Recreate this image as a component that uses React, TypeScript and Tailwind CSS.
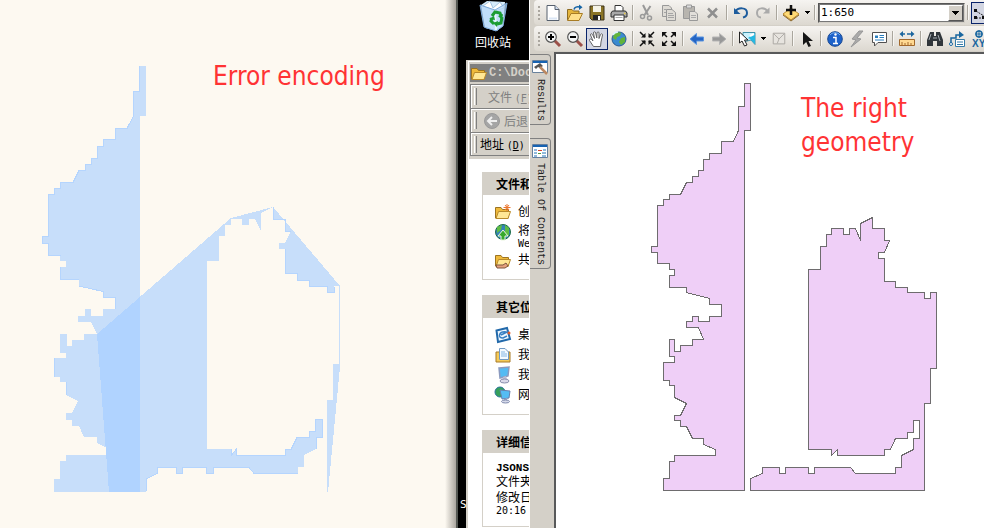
import React from "react";

type Pic = { children: React.ReactNode; className?: string };

function Icon({ children, className = "size-[18px]" }: Pic) {
  return (
    <svg viewBox="0 0 18 18" className={`${className} shrink-0`} fill="none" aria-hidden="true">
      {children}
    </svg>
  );
}

function Tool({ label, active, children }: { label: string; active?: boolean; children: React.ReactNode }) {
  return (
    <button
      type="button"
      aria-label={label}
      className={
        active
          ? "flex h-[22px] w-[22px] shrink-0 items-center justify-center border border-[#0a246a] bg-[#d3d6e2]"
          : "flex h-[22px] w-[22px] shrink-0 items-center justify-center"
      }
    >
      {children}
    </button>
  );
}

function Sep() {
  return <span className="mx-[2px] h-[15px] w-[2px] shrink-0 border-l border-[#aaa69d] bg-[#f8f7f4]" />;
}

function Grip() {
  return (
    <span className="flex w-[8px] shrink-0 flex-col gap-[2px] pl-[4px]">
      <i className="size-[2px] bg-[#aaa69f]" />
      <i className="size-[2px] bg-[#aaa69f]" />
      <i className="size-[2px] bg-[#aaa69f]" />
      <i className="size-[2px] bg-[#aaa69f]" />
    </span>
  );
}

function Caret({ label, className = "w-[10px]" }: { label: string; className?: string }) {
  return (
    <button type="button" aria-label={label} className={`${className} flex h-[22px] shrink-0 items-center justify-center`}>
      <svg viewBox="0 0 5 3" className="h-[3px] w-[5px]" shapeRendering="crispEdges">
        <path d="M0 0H5V1H4V2H3V3H2V2H1V1H0Z" fill="#000" />
      </svg>
    </button>
  );
}

function StandardBar() {
  return (
    <div role="toolbar" aria-label="Standard" className="flex h-[25px] items-center rounded-l-sm bg-linear-to-b from-[#f6f4f1] to-[#dcd8d0]">
      <Grip />
      <Tool label="New">
        <Icon>
          <path d="M3 1.5H11L15 5.5V16.5H3Z" fill="#fff" stroke="#56606e" />
          <path d="M11 1.5V5.5H15" fill="#cfdcf0" stroke="#56606e" />
          <path d="M5 14.5H13" stroke="#dbe6f5" strokeWidth="2" />
        </Icon>
      </Tool>
      <Tool label="Open">
        <Icon>
          <path d="M1.500 16V5.500H6L7.500 7H13V10" fill="#e5b53b" stroke="#8c6a22" />
          <path d="M1.500 16.500L5 9.500H16.500L13 16.500Z" fill="#ffe08a" stroke="#a87c24" />
          <path d="M8 5.500C8.500 3 11 2.500 13.500 3" stroke="#1463a5" strokeWidth="1.500" />
          <path d="M13 0.500L16.500 3.200L13 6Z" fill="#1463a5" />
        </Icon>
      </Tool>
      <Tool label="Save">
        <Icon>
          <path d="M2 2H16V16H4L2 14Z" fill="#8a7426" stroke="#3a3118" />
          <path d="M5 2H13V8H5Z" fill="#f5f3e6" />
          <path d="M5 11H13V16H5Z" fill="#272727" />
          <path d="M10 12H12V16H10Z" fill="#fff" />
        </Icon>
      </Tool>
      <Tool label="Print">
        <Icon>
          <path d="M5 7V1.500H11L13 3.500V7" fill="#fff" stroke="#333" />
          <path d="M2.500 7H15.500L17 9V13H1V9Z" fill="#a9a9a9" stroke="#2c2c2c" />
          <path d="M4 11H14V16.500H4Z" fill="#fff" stroke="#333" />
          <path d="M5.500 13.500H12.500" stroke="#aaa" />
          <path d="M14 9.500H15.500" stroke="#e6c83c" strokeWidth="1.500" />
        </Icon>
      </Tool>
      <Sep />
      <Tool label="Cut">
        <Icon>
          <path d="M5 1L10 11M12.500 2L6.500 11" stroke="#999" strokeWidth="2" />
          <circle cx="4.500" cy="12.500" r="2" stroke="#999" strokeWidth="1.500" />
          <circle cx="11.500" cy="14" r="2" stroke="#999" strokeWidth="1.500" />
        </Icon>
      </Tool>
      <Tool label="Copy">
        <Icon>
          <path d="M2.500 1.500H9L11.500 4V12.500H2.500Z" fill="#dedbd5" stroke="#999" />
          <path d="M6.500 5.500H12L15.500 8.500V16.500H6.500Z" fill="#dedbd5" stroke="#999" />
          <path d="M8 9.500H13M8 11.500H14M8 13.500H14M4 5.500H6M4 8.500H6" stroke="#a5a5a5" />
        </Icon>
      </Tool>
      <Tool label="Paste">
        <Icon>
          <path d="M1.500 2.500H12.500V14.500H1.500Z" fill="#b8b5af" stroke="#999" />
          <path d="M4.500 1H9.500V4H4.500Z" fill="#ddd" stroke="#999" />
          <path d="M7.500 7.500H13L15.500 10V16.500H7.500Z" fill="#e2dfda" stroke="#999" />
          <path d="M9 11.500H14M9 13.500H14" stroke="#aaa" />
        </Icon>
      </Tool>
      <Tool label="Delete">
        <Icon>
          <path d="M4 4.500L13 13.500M13 4.500L4 13.500" stroke="#8f8f8f" strokeWidth="2.500" />
        </Icon>
      </Tool>
      <Sep />
      <Tool label="Undo">
        <Icon>
          <path d="M3 8C6 3 15 3 15 9C15 11.500 13 13 11 13.500" stroke="#1d5c9d" strokeWidth="2" />
          <path d="M2 4V10H8.500Z" fill="#1d5c9d" />
        </Icon>
      </Tool>
      <Tool label="Redo">
        <Icon>
          <path d="M14 8C11 3 3 3 3 9C3 12 5 13.500 7 13.500" stroke="#aaa" strokeWidth="2" />
          <path d="M15.500 3.500V9.500H9Z" fill="#aaa" />
        </Icon>
      </Tool>
      <Sep />
      <Tool label="Add data">
        <Icon className="size-[18px]">
          <path d="M1 10L9 4L17 10L9 16Z" fill="#ffda75" stroke="#bb8b2d" />
          <path d="M1 11L9 17L17 11" stroke="#8d6728" />
          <path d="M9 1V11M4 6H14" stroke="#111" strokeWidth="2.500" />
        </Icon>
      </Tool>
      <Caret label="Add data options" />
      <Sep />
      <div className="relative h-[20px] w-[147px] shrink-0">
        <select
          aria-label="Map scale"
          className="block h-[20px] w-full appearance-none border border-[#d4d0c8] border-l-[#555] border-t-[#555] bg-white pl-[2px] font-['DejaVu_Sans_Mono',monospace] text-[11px] leading-[16px] text-black outline-1 -outline-offset-2 outline-[#777]"
        >
          <option>1:650</option>
        </select>
        <span className="pointer-events-none absolute right-[2px] top-[2px] flex h-[16px] w-[15px] items-center justify-center border border-[#555] border-l-white border-t-white bg-[#d4d0c8]">
          <svg viewBox="0 0 7 4" className="h-[4px] w-[7px]" shapeRendering="crispEdges">
            <path d="M0 0H7V1H6V2H5V3H4V4H3V3H2V2H1V1H0Z" fill="#000" />
          </svg>
        </span>
      </div>
      <Sep />
      <Tool label="Editor" active>
        <Icon>
          <path d="M3 7L11 12M3 14H14" stroke="#222" strokeDasharray="2 1" />
          <path d="M1 5H4V8H1ZM1 12H4V15H1ZM9 12H12V15H9Z" fill="#111" />
        </Icon>
      </Tool>
    </div>
  );
}

function ToolsBar() {
  return (
    <div role="toolbar" aria-label="Tools" className="flex h-[25px] items-center rounded-l-sm bg-linear-to-b from-[#f6f4f1] to-[#dcd8d0]">
      <Grip />
      <Tool label="Zoom in">
        <Icon>
          <path d="M10.500 10.500L16 16" stroke="#9c5149" strokeWidth="3" />
          <circle cx="7" cy="7" r="5.300" fill="#f4f5f5" stroke="#555" strokeWidth="1.200" />
          <path d="M7 4V10M4 7H10" stroke="#000" strokeWidth="2" />
        </Icon>
      </Tool>
      <Tool label="Zoom out">
        <Icon>
          <path d="M10.500 10.500L16 16" stroke="#9c5149" strokeWidth="3" />
          <circle cx="7" cy="7" r="5.300" fill="#f4f5f5" stroke="#555" strokeWidth="1.200" />
          <path d="M4 7H10" stroke="#000" strokeWidth="2" />
        </Icon>
      </Tool>
      <Tool label="Pan" active>
        <Icon>
          <path d="M5.500 16.500L1.500 10.500C1 9 2.500 8.500 3.500 9.500L5 11L2.500 5C2.300 3.500 4 3.300 4.500 4.500L6.500 8.500L5.500 3C5.500 1.300 7.300 1.300 7.700 3L8.800 8L9 3C9.300 1.300 11 1.500 11 3V8.500L12.500 4.500C13.200 3.200 14.700 3.800 14.500 5L13 12L12.500 16.500Z" fill="#fff" stroke="#666" />
        </Icon>
      </Tool>
      <Tool label="Full extent">
        <Icon>
          <circle cx="9" cy="9" r="7" fill="#3b8bd0" stroke="#2b5b90" />
          <path d="M4 4C6 2 9 2 11 3L10 6L7 7L6 10L3 8ZM11 8L15 7L15 12L11 15L9 12Z" fill="#62b33a" />
          <path d="M3 5C4 3 6 2 8 2" stroke="#dff1ff" strokeWidth="1.500" />
        </Icon>
      </Tool>
      <Sep />
      <Tool label="Fixed zoom in">
        <Icon>
          <path d="M2 2L7 7M16 2L11 7M2 16L7 11M16 16L11 11" stroke="#111" strokeWidth="1.500" />
          <path d="M7.500 3V7.500H3ZM10.500 3V7.500H15ZM7.500 15V10.500H3ZM10.500 15V10.500H15Z" fill="#111" />
        </Icon>
      </Tool>
      <Tool label="Fixed zoom out">
        <Icon>
          <path d="M3 3L7 7M15 3L11 7M3 15L7 11M15 15L11 11" stroke="#111" strokeWidth="1.500" />
          <path d="M2 2H7L2 7ZM16 2H11L16 7ZM2 16H7L2 11ZM16 16H11L16 11Z" fill="#111" />
        </Icon>
      </Tool>
      <Sep />
      <Tool label="Back">
        <Icon>
          <path d="M2 9L8.500 3.500V7H15.500V11H8.500V14.500Z" fill="#2565c4" stroke="#5b95df" />
        </Icon>
      </Tool>
      <Tool label="Forward">
        <Icon>
          <path d="M16 9L9.500 3.500V7H2.500V11H9.500V14.500Z" fill="#989898" stroke="#b5b5b5" />
        </Icon>
      </Tool>
      <Sep />
      <Tool label="Select features">
        <Icon>
          <path d="M5 2.500H17V14.500L13 10L5 12Z" fill="#c9f1fc" stroke="#4392a9" />
          <path d="M10 8L17 3V14L12 9Z" fill="#26b8e2" />
          <path d="M12 6L16 4" stroke="#fff" strokeWidth="2" />
          <path d="M1.500 2V13L4 11L6.500 16L9 15L6.500 10H10Z" fill="#fff" stroke="#222" />
        </Icon>
      </Tool>
      <Caret label="Selection options" />
      <Tool label="Clear selection">
        <Icon className="size-[16px]">
          <path d="M2.500 2.500H15.500V14.500H2.500Z" fill="#e7e4df" stroke="#a6a39e" />
          <path d="M3 3L9 9L15 3M9 9L7 14" stroke="#aaa7a2" />
        </Icon>
      </Tool>
      <Sep />
      <Tool label="Select elements">
        <Icon>
          <path d="M5 2V15L8.200 12L10.500 17L13 16L10.500 11H15Z" fill="#151515" />
        </Icon>
      </Tool>
      <Sep />
      <Tool label="Identify">
        <Icon>
          <circle cx="9" cy="9" r="7.300" fill="#1d62ca" stroke="#194891" />
          <path d="M4 5C6 2 12 2 14 5" stroke="#75b1f4" />
          <path d="M7 7.500H10V13M7 13.500H12" stroke="#fff" strokeWidth="1.500" />
          <circle cx="9.500" cy="4.500" r="1.200" fill="#fff" />
        </Icon>
      </Tool>
      <Tool label="Hyperlink">
        <Icon>
          <path d="M11 1L4 9L8 10L3 17L13 9L9 8L15 1Z" fill="#aaa" stroke="#979797" />
        </Icon>
      </Tool>
      <Tool label="HTML popup">
        <Icon>
          <path d="M2.500 2.500H16.500V12.500H8L4.500 16V12.500H2.500Z" fill="#fff" stroke="#505050" />
          <path d="M5 5.500H8V8H5Z" fill="#2b7fbd" />
          <path d="M9.500 5.500H14M9.500 7.500H14M5 10H14" stroke="#2b7fbd" />
        </Icon>
      </Tool>
      <Sep />
      <Tool label="Measure">
        <Icon>
          <path d="M3 4H15" stroke="#1b659e" strokeWidth="1.500" strokeDasharray="4 2" />
          <path d="M5 1L1.500 4L5 7ZM13 1L16.500 4L13 7Z" fill="#1b659e" />
          <path d="M1.500 9.500H16.500V15.500H1.500Z" fill="#ffd992" stroke="#a2682c" />
          <path d="M4 12V15M7 13V15M10 12V15M13 13V15" stroke="#a2682c" />
        </Icon>
      </Tool>
      <Sep />
      <Tool label="Find">
        <Icon>
          <path d="M4 2H8V6H10V2H14L17 10V16H11V11H7V16H1V10Z" fill="#30363b" />
          <path d="M3 10L5 4M12 5L14 11M7 8H11" stroke="#a6adb3" />
        </Icon>
      </Tool>
      <Tool label="Find route">
        <Icon>
          <path d="M3 13V8H8V5H12" stroke="#19669f" strokeWidth="1.500" />
          <path d="M11 1L16 5L11 8Z" fill="#19669f" />
          <circle cx="3" cy="14" r="1.500" fill="#fff" stroke="#19669f" />
          <path d="M7.500 9.500H16.500V16.500H7.500Z" fill="#fff" stroke="#347ba9" />
          <path d="M9 12H15M9 14.500H15" stroke="#347ba9" />
        </Icon>
      </Tool>
      <Tool label="Go to XY">
        <svg viewBox="0 0 20 20" className="size-[20px] shrink-0" fill="none">
          <circle cx="10" cy="5" r="3" stroke="#19669f" strokeWidth="1.500" />
          <path d="M10 1V9M6 5H14" stroke="#19669f" />
          <text x="3" y="18" fontSize="10" fontWeight="bold" fill="#19669f" fontFamily="Liberation Sans">XY</text>
        </svg>
      </Tool>
    </div>
  );
}

function BrokenMap() {
  return (
    <svg viewBox="0 0 456 528" className="h-[528px] w-[456px]" shapeRendering="crispEdges" aria-label="Wrongly encoded polygon">
      <g fill="#c7defa">
        <path d="M139 66H146V116H140V492H54V479H60V461H66V455H109V449L97 443V437H84L79 426H72V420H66V413H72L78 401L66 395V382H60V377H54V358H66V353H60V334H67V346H72V340H84V334H97L91 322H78V316H85V309H91V316H103V309H115V297H103V291L79 286V279H60V267H66V261H60V255H48V243H42V236H48V194H54V188H60V182H73L79 170H85V164H91V158H97V146H103V139H115V128H127L133 116V91H139Z" />
        <path d="M97 334L231 218L273 207L340 286V367L328 492H327V400H333V364H339V286H334V292H327V286H309V280H297V273H285V249H279V243H285L291 231H285V219H273V207L261 213V231L255 219H249V225H242V219H231V225H225V236H219V261H207V449H231V455L236 449V455H285V449H291L297 437H309V431H315V419H322V437H316V449L304 455V467H298V473H254L249 467H213V473H206V467H182V473H176V467H157V473L146 479V492H109Z" />
      </g>
      <path d="M97 334L140 297V492H109Z" fill="#b0d3ff" />
      <path
        d="M139.500 66V91.500H133.500V116L127 128.500H115.500V139.500H103.500V146.500H97.500V158.500H91.500V164.500H85.500V170.500H79L73 182.500H60.500V188.500H54.500V194.500H48.500V236.500H42.500V243.500H48.500V255.500H60.500M60.500 267V279.500H79M79 286L103 291.500V297.500H115.500V309M54.500 358V377M66.500 395V382M146.500 491V479L157.500 473V467.500H176.500V473.500H182.500V467.500H206.500V473.500H213.500V467.500H249L254 473.500H298M231.500 449V455L236.500 449V455.500H285.500V449.500H291L297 437.500H309.500V431.500H315.500V419.500H322.500V437.500H316.500V449M273.500 207V219.500H285.500V231.500H291M285.500 249V273.500H297.500V280.500H309.500V286.500H327.500V292.500H334.500V286.500"
        fill="none"
        stroke="#b5d5fe"
      />
    </svg>
  );
}

function RightMap() {
  return (
    <svg viewBox="556 54 428 474" className="h-[474px] w-[428px] shrink-0" shapeRendering="crispEdges" aria-label="Correct polygon">
      <g transform="translate(.5 .5)" fill="#efcff7" stroke="#6e6c6e">
        <path d="M744 83H750V130H744V490H663V478H669V461H674V455H715V449L703 444V438H692L686 426H680V420H674V415H680L686 403L674 397V385H669V380H663V362H674V356H669V339H674V351H680V345H692V339H703L698 327H686V321H692V316H698V321H709V316H721V304H709V298L686 292V287H669V275H674V269H669V263H657V252H651V246H657V205H663V199H669V194H680L686 182H692V176H698V170H703V159H709V153H721V141H733L738 130V106H744Z" />
        <path d="M808 269H820V246H826V234H831V228H843V234H849V228H855L860 240V223L872 217V228H884V240H889L884 252H878V258H884V281H895V287H907V292H924V298H930V292H936V368H930V403H924V490H750V478L762 473V467H779V473H785V467H808V473H814V467H850L855 473H895V467H901V455L913 449V438H919V420H913V432H907V438H895L890 449H884V455H837V449L831 455V449H808Z" />
      </g>
    </svg>
  );
}

function Folder() {
  return (
    <>
      <path d="M1.500 15V4.500H7L8.500 6.500H14.500V15Z" fill="#efba3c" stroke="#9d7421" />
      <path d="M2 15.500L4.500 8.500H16.500L14 15.500Z" fill="#ffe795" stroke="#b88a2b" />
    </>
  );
}

function Latin({ children }: { children: React.ReactNode }) {
  return <span className="font-['DejaVu_Sans_Mono',monospace] text-[10px]">{children}</span>;
}

function Card({ title, children, className }: { title: string; children: React.ReactNode; className: string }) {
  return (
    <section className={`${className} w-[180px] border border-[#d4d0c8] bg-white`}>
      <h2 className="h-[22px] bg-[#d4d0c8] pl-[13px] text-[12px] font-bold leading-[22px]">{title}</h2>
      {children}
    </section>
  );
}

function TaskLink({ text, children }: { text: React.ReactNode; children: React.ReactNode }) {
  return (
    <a href="#task" className="flex items-start gap-[6px] pl-[11px]">
      <Icon>{children}</Icon>
      <span className="leading-[15px]">{text}</span>
    </a>
  );
}

function Explorer() {
  return (
    <div className="absolute left-[8px] top-[60px] flex h-[480px] w-[220px] flex-col whitespace-nowrap border-l border-t border-[#d4d0c8] bg-[#d4d0c8] font-['Noto_Sans_CJK_SC',sans-serif] text-[12px] text-black">
      <div className="ml-px flex flex-1 flex-col border-l border-t border-white">
        <header className="ml-px mt-[2px] flex h-[18px] shrink-0 items-center gap-px bg-[#808080] font-['Liberation_Mono',monospace] font-bold text-[#d4d0c8]">
          <Icon><Folder /></Icon>
          <span className="leading-[18px]">C:\Documents</span>
        </header>
        <nav className="ml-px text-[#808080]">
          <div className="mt-[2px] flex h-[24px] items-center border-l border-t border-[#808080] pl-[3px] shadow-[inset_1px_1px_#fff]">
            <i className="h-[17px] w-[3px] border-l border-r border-l-white border-r-[#808080]" />
            <button type="button" className="pl-[11px]">文件 <Latin>(<u>F</u>)</Latin></button>
          </div>
          <div className="flex h-[24px] items-center border-l border-t border-[#808080] pl-[3px] shadow-[inset_1px_1px_#fff]">
            <i className="h-[17px] w-[3px] border-l border-r border-l-white border-r-[#808080]" />
            <button type="button" className="flex items-center gap-[3px] pl-[6px]">
              <Icon>
                <circle cx="9" cy="9" r="7.500" fill="#a5a5a5" stroke="#999" />
                <path d="M14 9H5M9 5L5 9L9 13" stroke="#eee" strokeWidth="2" />
              </Icon>
              后退
            </button>
          </div>
        </nav>
        <div className="ml-px flex h-[24px] shrink-0 items-center border border-[#808080] pl-[3px] text-black shadow-[inset_1px_1px_#fff]">
          <i className="h-[17px] w-[3px] border-l border-r border-l-white border-r-[#808080]" />
          <span className="pl-[3px]">地址 <Latin>(<u>D</u>)</Latin></span>
        </div>
        <main className="mt-[3px] flex flex-1 flex-col bg-white pl-[13px]">
          <Card title="文件和文件夹任务" className="mt-[13px] h-[108px]">
            <div className="flex flex-col gap-[2px] pt-[8px]">
              <TaskLink text="创建一个新文件夹">
                <Folder />
                <path d="M13 1V8M9.500 4.500H16.500M11 2L15 7M15 2L11 7" stroke="#ed772f" />
              </TaskLink>
              <TaskLink text={<span className="flex flex-col"><span className="leading-[14px]">将这个文件夹发布到</span><span className="flex h-[12px] items-center"><Latin>Web</Latin></span></span>}>
                <circle cx="9" cy="9" r="7.500" fill="#3483b7" stroke="#1d6c48" />
                <path d="M3 4L8 2L7 7L3 10ZM11 2L15 5L15 12L11 14Z" fill="#5fbd43" />
                <path d="M9 7L14 13H11V17H7V13H4Z" fill="#37a92d" stroke="#e9f6df" />
              </TaskLink>
              <TaskLink text="共享此文件夹">
                <Folder />
                <path d="M2 14H9L12 12L14 15L11 17H3Z" fill="#e5a17e" stroke="#7e573d" />
              </TaskLink>
            </div>
          </Card>
          <Card title="其它位置" className="mt-[15px] h-[120px]">
            <div className="flex flex-col gap-[2px] pt-[8px]">
              <TaskLink text="桌面">
                <path d="M2.500 4.500L13 2L16 13L4 16Z" fill="#f0f8ff" stroke="#2269aa" strokeWidth="2" />
                <path d="M12 6C5 5 3 12 9 12L13 10M7 9L15 5" stroke="#397fc2" strokeWidth="1.500" />
                <circle cx="15" cy="7" r="1.500" fill="#e05a28" />
              </TaskLink>
              <TaskLink text="我的文档">
                <path d="M2 6H16V16H2Z" fill="#f5cb58" stroke="#a77b28" />
                <path d="M5.500 2.500H11L14.500 6V13.500H5.500Z" fill="#f4faff" stroke="#7099c3" />
                <path d="M7 6H11M7 8H13M7 10H13" stroke="#83b6e5" />
              </TaskLink>
              <TaskLink text="我的电脑">
                <path d="M5 2L15 1L14 10L6 12Z" fill="#53bbf3" stroke="#8b9abf" strokeWidth="1.500" />
                <path d="M9 11L12 10L13 13L8 14Z" fill="#b9bed4" />
                <ellipse cx="10.500" cy="15" rx="4.500" ry="2" fill="#d9d9e9" stroke="#8a8fad" />
              </TaskLink>
              <TaskLink text="网上邻居">
                <circle cx="6" cy="6" r="5" fill="#36a05b" stroke="#2b749c" />
                <path d="M6 4L16 5L15 12L8 13Z" fill="#55bdf4" stroke="#687fae" />
                <path d="M10 13L13 12V15H10Z" fill="#9ca8c8" />
                <ellipse cx="11.500" cy="15.500" rx="4" ry="1.500" fill="#d6daea" stroke="#818bae" />
              </TaskLink>
            </div>
          </Card>
          <Card title="详细信息" className="mt-[15px] h-[97px]">
            <div className="flex flex-col pl-[13px] pt-[9px] leading-[13px]">
              <p className="font-['Liberation_Mono',monospace] text-[11px] font-bold leading-[12px]">JSONSQL</p>
              <p>文件夹</p>
              <p className="mt-[3px]">修改日期:</p>
              <p className="leading-[12px]"><Latin>20:16</Latin></p>
            </div>
          </Card>
        </main>
      </div>
    </div>
  );
}

function Desktop() {
  return (
    <section aria-label="Desktop" className="relative h-full overflow-hidden border-l-2 border-[#555853] bg-black">
      <div className="flex w-[70px] flex-col items-center text-white">
        <svg viewBox="0 0 30 32" className="h-[32px] w-[30px]" fill="none">
          <path d="M3 5L9 1L27 2L25 26L19 31L7 28Z" fill="#d7ecfb" />
          <path d="M5 6L12 1L15 8L22 2L26 8L17 11Z" fill="#fff" stroke="#a5c4df" />
          <path d="M2 5L17 10L29 3L25 26L18 31L6 27Z" fill="#b8dafa" fillOpacity=".75" stroke="#80addd" />
          <path d="M17 10L18 30" stroke="#e9f7ff" strokeWidth="2" />
          <path d="M14 16L17 12L22 13L23 16M24 17L23 23L19 24M16 24L13 21L14 18" stroke="#1b9c33" strokeWidth="3" />
          <path d="M20 16L25 14L24 20ZM20 21L19 27L15 23ZM11 19L16 16L17 20Z" fill="#1b9c33" />
        </svg>
        <span className="mt-px font-['Noto_Sans_CJK_SC',sans-serif] text-[12px] leading-[18px]">回收站</span>
      </div>
      <span className="absolute left-[2px] top-[498px] font-['DejaVu_Sans_Mono',monospace] text-[11px] leading-[14px] text-white">S</span>
      <Explorer />
    </section>
  );
}

function DockTab({ text, children, className }: { text: string; children: React.ReactNode; className: string }) {
  return (
    <button
      type="button"
      className={`${className} flex w-[21px] flex-col items-center gap-[3px] rounded-r-[4px] border border-l-0 border-[#808080] bg-[#d4d0c8] pt-[3px]`}
    >
      <Icon>{children}</Icon>
      <span className="whitespace-nowrap font-['Liberation_Mono',monospace] text-[10px] leading-[14px] text-[#222] [writing-mode:vertical-rl]">{text}</span>
    </button>
  );
}

function MapEditor() {
  return (
    <section aria-label="Map editor" className="flex h-full min-w-0 flex-col overflow-hidden border-l border-white bg-[#d4d0c8]">
      <div className="flex flex-col gap-px pb-px pl-[4px]">
        <StandardBar />
        <ToolsBar />
      </div>
      <div className="flex min-h-0 flex-1">
        <aside className="w-[24px] shrink-0 pt-[2px]">
          <DockTab text="Results" className="h-[71px]">
            <path d="M1.500 2.500H16.500V14.500H1.500Z" fill="#fff" stroke="#69829c" />
            <path d="M2 3H16V5H2Z" fill="#1763b2" />
            <path d="M3 9L9 5L12 8L9 10L7 9L5 11Z" fill="#555" />
            <path d="M9 9L16 16" stroke="#bc8861" strokeWidth="2.500" />
          </DockTab>
          <DockTab text="Table Of Contents" className="mt-[13px] h-[131px]">
            <path d="M1.500 2.500H16.500V15.500H1.500Z" fill="#fff" stroke="#647f9e" />
            <path d="M2 3H16V5H2Z" fill="#1763b2" />
            <path d="M3 8H6M3 11H6M3 14H6M12 8H15M11 11H15M11 14H15" stroke="#2375b9" />
            <path d="M7 8.500H11" stroke="#d8402e" />
            <path d="M7 11.500H10" stroke="#4c9d45" />
          </DockTab>
        </aside>
        <div className="relative min-w-0 flex-1 overflow-hidden border-l-2 border-t-2 border-[#58595a] bg-white">
          <RightMap />
          <p className="absolute left-[245px] top-[37px] w-[130px] font-['DejaVu_Sans_Condensed','Noto_Sans',sans-serif] text-[26px] leading-[34px] text-[#ff3334]">
            The right geometry
          </p>
        </div>
      </div>
    </section>
  );
}

export default function App() {
  return (
    <div className="grid h-screen min-h-[528px] w-full grid-cols-[456fr_73px_455fr] overflow-hidden bg-black">
      <section aria-label="Encoded output" className="relative h-full min-w-0 overflow-hidden bg-[#fdf9f1]">
        <BrokenMap />
        <p className="absolute left-[213px] top-[59px] whitespace-nowrap font-['DejaVu_Sans_Condensed','Noto_Sans',sans-serif] text-[26px] leading-[34px] text-[#ff3334]">
          Error encoding
        </p>
        <span className="absolute inset-y-0 right-0 w-[11px] bg-linear-to-r from-transparent to-[#aaa69f]" />
      </section>
      <Desktop />
      <MapEditor />
    </div>
  );
}
